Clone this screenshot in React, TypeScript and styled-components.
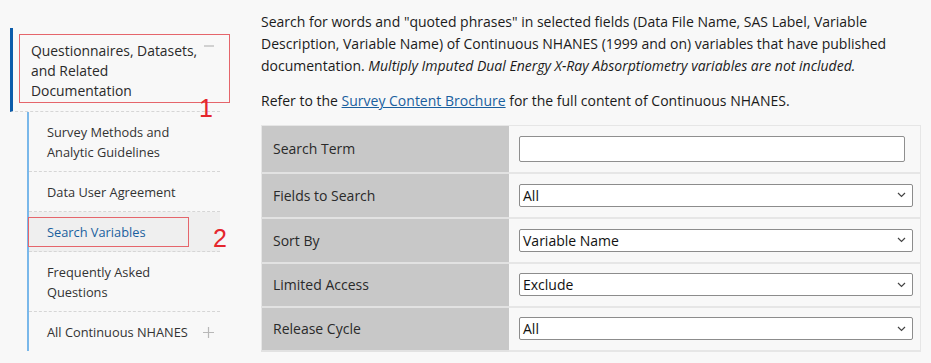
import React from 'react';
import styled, { createGlobalStyle } from 'styled-components';

const GlobalStyle = createGlobalStyle`
  html, body {
    margin: 0;
    padding: 0;
    background: #f8f8f8;
  }
  body {
    font-family: 'Open Sans', 'Noto Sans', sans-serif;
    color: #1b1b1b;
  }
`;

const Page = styled.div`
  position: relative;
  display: flex;
  align-items: flex-start;
  width: 931px;
  height: 363px;
  overflow: hidden;
`;

const Sidebar = styled.nav`
  width: 210px;
  margin: 28px 0 0 10px;
  flex-shrink: 0;
`;

const TopItem = styled.div`
  display: flex;
  align-items: flex-start;
  gap: 4px;
  border-left: 3px solid #0b5cab;
  border-bottom: 1px dashed #d6d6d6;
  padding: 13px 5px 10px 18px;
  font-size: 13.9px;
  line-height: 20px;
  color: #2a2a2a;
`;

const ItemText = styled.span`
  flex: 1;
  white-space: nowrap;
`;

const Toggle = styled.span<{ $top?: number }>`
  display: flex;
  width: 12px;
  justify-content: center;
  margin-top: ${(p) => p.$top ?? 0}px;
`;

const SubList = styled.ul`
  list-style: none;
  margin: 0 0 0 17px;
  padding: 0;
  border-left: 2px solid #7ab8ea;
`;

const SubItem = styled.li<{ $active?: boolean; $last?: boolean }>`
  display: flex;
  align-items: center;
  gap: 2px;
  padding: 10px 6px 9px 18px;
  font-size: 12.8px;
  line-height: 20px;
  color: ${(p) => (p.$active ? '#1a5f9e' : '#333')};
  background: ${(p) => (p.$active ? '#efefef' : 'transparent')};
  border-bottom: ${(p) => (p.$last ? 'none' : '1px dashed #d6d6d6')};
`;

const Main = styled.main`
  width: 660px;
  margin-left: 41px;
  padding-top: 11px;
`;

const Para = styled.p`
  margin: 0 0 13px;
  font-size: 14px;
  line-height: 22px;
`;

const Link = styled.a`
  color: #1a5f9e;
  text-decoration: underline;
`;

const Table = styled.table`
  width: 660px;
  border-collapse: collapse;
  border: 1px solid #e6e6e6;
`;

const Row = styled.tr<{ $h: number }>`
  height: ${(p) => p.$h}px;
`;

const Label = styled.th`
  width: 236px;
  background: #c8c8c8;
  text-align: left;
  font-weight: 400;
  font-size: 14px;
  color: #2a2a2a;
  padding: 0 0 0 11px;
  border-bottom: 2px solid #e2e2e2;
`;

const Cell = styled.td`
  padding: 0 7px 0 10px;
  border-bottom: 2px solid #e6e6e6;
`;

const TextInput = styled.input`
  box-sizing: border-box;
  width: 386px;
  height: 26px;
  border: 1px solid #8f8f8f;
  border-radius: 2px;
  background: #fff;
`;

const SelectBox = styled.div`
  box-sizing: border-box;
  display: flex;
  justify-content: space-between;
  align-items: center;
  width: 394px;
  height: 23px;
  padding: 0 6px 0 3px;
  border: 1px solid #8c8c8c;
  border-radius: 2px;
  background: #fff;
  font-size: 14px;
  color: #111;
`;

const RedBox = styled.div<{ $x: number; $y: number; $w: number; $h: number }>`
  position: absolute;
  left: ${(p) => p.$x}px;
  top: ${(p) => p.$y}px;
  width: ${(p) => p.$w}px;
  height: ${(p) => p.$h}px;
  border: 1px solid #e5656b;
  box-sizing: border-box;
`;

const Marker = styled.span<{ $x: number; $y: number }>`
  position: absolute;
  left: ${(p) => p.$x}px;
  top: ${(p) => p.$y}px;
  color: #e5262d;
  font-family: 'Liberation Sans', sans-serif;
  font-size: 25px;
  line-height: 25px;
`;

const Minus = () => (
  <svg width="10" height="10" viewBox="0 0 10 10">
    <path d="M0 5h10" stroke="#b8b8b8" strokeWidth="1.2" />
  </svg>
);

const Plus = () => (
  <svg width="11" height="11" viewBox="0 0 11 11">
    <path d="M0 5.5h11M5.5 0v11" stroke="#b8b8b8" strokeWidth="1.2" />
  </svg>
);

const Chevron = () => (
  <svg width="9" height="6" viewBox="0 0 9 6">
    <path d="M1 1l3.5 3.5L8 1" fill="none" stroke="#444" strokeWidth="1.2" />
  </svg>
);

const Select = ({ value }: { value: string }) => (
  <SelectBox>
    <span>{value}</span>
    <Chevron />
  </SelectBox>
);

const App = () => (
  <Page>
    <GlobalStyle />
    <Sidebar>
      <TopItem>
        <ItemText>
          Questionnaires, Datasets,
          <br />
          and Related
          <br />
          Documentation
        </ItemText>
        <Toggle>
          <Minus />
        </Toggle>
      </TopItem>
      <SubList>
        <SubItem>
          <ItemText>
            Survey Methods and
            <br />
            Analytic Guidelines
          </ItemText>
        </SubItem>
        <SubItem>
          <ItemText>Data User Agreement</ItemText>
        </SubItem>
        <SubItem $active>
          <ItemText>Search Variables</ItemText>
        </SubItem>
        <SubItem>
          <ItemText>
            Frequently Asked
            <br />
            Questions
          </ItemText>
        </SubItem>
        <SubItem $last>
          <ItemText>All Continuous NHANES</ItemText>
          <Toggle>
            <Plus />
          </Toggle>
        </SubItem>
      </SubList>
    </Sidebar>
    <Main>
      <Para>
        Search for words and "quoted phrases" in selected fields (Data File Name, SAS Label, Variable
        Description, Variable Name) of Continuous NHANES (1999 and on) variables that have published
        documentation. <em>Multiply Imputed Dual Energy X-Ray Absorptiometry variables are not included.</em>
      </Para>
      <Para>
        Refer to the <Link href="#">Survey Content Brochure</Link> for the full content of Continuous NHANES.
      </Para>
      <Table>
        <tbody>
          <Row $h={47}>
            <Label>Search Term</Label>
            <Cell>
              <TextInput type="text" />
            </Cell>
          </Row>
          <Row $h={45}>
            <Label>Fields to Search</Label>
            <Cell>
              <Select value="All" />
            </Cell>
          </Row>
          <Row $h={45}>
            <Label>Sort By</Label>
            <Cell>
              <Select value="Variable Name" />
            </Cell>
          </Row>
          <Row $h={44}>
            <Label>Limited Access</Label>
            <Cell>
              <Select value="Exclude" />
            </Cell>
          </Row>
          <Row $h={44}>
            <Label>Release Cycle</Label>
            <Cell>
              <Select value="All" />
            </Cell>
          </Row>
        </tbody>
      </Table>
    </Main>
    <RedBox $x={19} $y={34} $w={211} $h={69} />
    <Marker $x={199} $y={96}>1</Marker>
    <RedBox $x={28} $y={217} $w={161} $h={30} />
    <Marker $x={213} $y={226}>2</Marker>
  </Page>
);

export default App;
